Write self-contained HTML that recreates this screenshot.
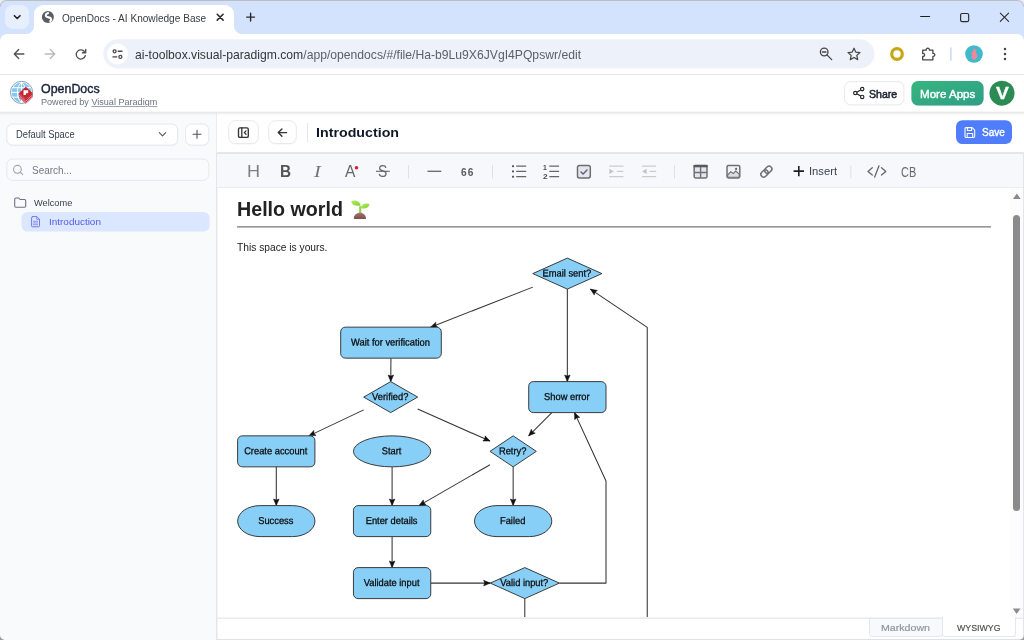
<!DOCTYPE html>
<html lang="en">
<head>
<meta charset="utf-8">
<title>OpenDocs - AI Knowledge Base</title>
<style>
*{box-sizing:border-box;margin:0;padding:0}
html,body{width:1024px;height:640px;overflow:hidden;background:#fff}
body{font-family:"Liberation Sans",sans-serif;position:relative;color:#1f2937}
.abs{position:absolute}
.t{position:absolute;white-space:nowrap;line-height:1;transform-origin:0 50%}
svg{position:absolute;overflow:visible}
/* browser chrome */
#tabstrip{left:-8px;top:-8px;width:1040px;height:48px;background:#d3e3fd}
#tabsearch{left:5px;top:5px;width:24px;height:24px;border-radius:8px;background:#e7effd}
#tab{left:34px;top:5px;width:200px;height:30px;background:#fff;border-radius:9px 9px 0 0}
#tabl{left:26px;top:26px;width:8px;height:8px;background:radial-gradient(circle at 0 0,rgba(255,255,255,0) 7.5px,#fff 8.5px)}
#tabr{left:234px;top:26px;width:8px;height:8px;background:radial-gradient(circle at 100% 0,rgba(255,255,255,0) 7.5px,#fff 8.5px)}
#toolbar{left:0;top:34px;width:1024px;height:40px;background:#fff;border-radius:7px 7px 0 0}
#toolbarbleed{left:-8px;top:41px;width:1040px;height:33px;background:#fff}
#tbline{left:-8px;top:74px;width:1040px;height:1px;background:#e4e6e4}
#omni{left:103px;top:39.5px;width:771.5px;height:29px;border-radius:14.5px;background:#edf2fa}
#siteinfo{left:106.5px;top:43px;width:22px;height:22px;border-radius:11px;background:#fff}
/* app */
#apphead{left:-8px;top:75px;width:1040px;height:37px;background:#fff}
#appline{left:-8px;top:111px;width:1040px;height:5px;background:linear-gradient(rgba(10,10,30,.03) 0 1px,rgba(10,14,30,.095) 1px 2px,rgba(0,0,0,.05) 2px 3px,rgba(0,0,0,.02) 3px 4px,rgba(0,0,0,.008) 4px 5px)}
#sidebar{left:-8px;top:113px;width:224px;height:535px;background:#f9fafb}
#sideline{left:216px;top:113px;width:1px;height:40px;background:#ebedf1}
#sideline2{left:216px;top:153px;width:2px;height:495px;background:linear-gradient(90deg,#e4e5ea 0 1px,#f3f3f6 1px 2px)}
.btn{position:absolute;background:#fff;border:1px solid #e5e7eb;border-radius:6px}
#edbar{left:217px;top:153px;width:806px;height:35px;background:#f7f8fc;border-top:1px solid #e2e5ec;border-bottom:1px solid #ebedf2}
#docline{left:217px;top:152px;width:815px;height:1px;background:#e5e7eb}
#h1line{left:237px;top:226px;width:754px;height:2px;background:linear-gradient(#989898 0,#989898 50%,#bbb 50%,#bbb 100%)}
#track{left:1010px;top:188px;width:13px;height:430px;background:#fcfcfc}
#thumb{left:1012.9px;top:214.5px;width:7.6px;height:296.5px;border-radius:3.8px;background:#8b8b8b}
#botline{left:217px;top:617px;width:806px;height:2px;background:linear-gradient(#f2f3f7 0 1px,#e9ebf0 1px 2px)}
#rline{left:1023px;top:153px;width:9px;height:495px;background:#e3e5ee}
#bline{left:217px;top:639px;width:815px;height:9px;background:#dfe1e8}
#tabmd{left:868.5px;top:618px;width:74.5px;height:19px;background:#f7f9fc;border:1px solid #e5e7ef;border-radius:0 0 3px 3px}
#tabwy{left:942px;top:617px;width:74px;height:20px;background:#fff;border:1px solid #e5e7ef;border-top:0;border-radius:0 0 3px 3px}
#wrap{position:absolute;left:-8px;top:-8px;width:1040px;height:656px;overflow:hidden;will-change:transform}
#pg{position:absolute;left:8px;top:8px;width:1024px;height:640px}
</style>
</head>
<body>
<div id="wrap"><div id="pg">
<!-- ===== Browser chrome ===== -->
<div class="abs" id="tabstrip"></div>
<div class="abs" id="tabsearch"></div>
<div class="abs" id="tab"></div>
<div class="abs" id="tabl"></div><div class="abs" id="tabr"></div>
<div class="abs" id="toolbar"></div><div class="abs" id="toolbarbleed"></div>
<div class="abs" id="tbline"></div>
<svg width="1024" height="75" viewBox="0 0 1024 75" style="left:0;top:0"><rect x="103.200" y="39.200" width="771.300" height="29.200" rx="14.600" fill="#edf2fa"/><circle cx="117.500" cy="54" r="10.400" fill="#fff"/></svg>
<div class="t" style="left:61.83px;top:12px;font-size:11.6px;color:#393c40;transform:scaleX(0.8703);">OpenDocs - AI Knowledge Base</div>
<div class="t" style="left:134.69px;top:48px;font-size:13.6px;color:#34363a;transform:scaleX(0.8943);">ai-toolbox.visual-paradigm.com<span style="color:#5c6066">/app/opendocs/#/file/Ha-b9Lu9X6JVgI4PQpswr/edit</span></div>
<svg id="chromeicons" width="1024" height="75" viewBox="0 0 1024 75" style="left:0;top:0" fill="none" stroke-linecap="round" stroke-linejoin="round">
<!-- tab search chevron -->
<path d="M14.400 15.700L17.200 18.500L20 15.700" stroke="#1f1f1f" stroke-width="1.600"/>
<!-- favicon globe -->
<circle cx="47.900" cy="17.100" r="6" fill="#5a5d61"/>
<path d="M48.800 12.700c-2.300.500-3.600 2.300-2.600 3.700 1 1.300 3.600.700 4.600 2 .800 1.100.100 2.600-1.200 3.400" stroke="#fff" stroke-width="2.100" stroke-linecap="butt"/>
<!-- tab close -->
<path d="M217.200 14.200l5.900 5.900M223.100 14.200l-5.900 5.900" stroke="#2a2a2a" stroke-width="1.550"/>
<!-- new tab plus -->
<path d="M246.700 17.100h7.800M250.600 13.200v7.800" stroke="#2a2a2a" stroke-width="1.400"/>
<!-- window controls -->
<path d="M920.600 16.500h9" stroke="#1f1f1f" stroke-width="1.1"/>
<rect x="960.600" y="13.500" width="8.100" height="8.100" rx="1.600" stroke="#2a2a2a" stroke-width="1.150"/>
<path d="M1000.300 13.100l8.300 8.300M1008.600 13.100l-8.300 8.300" stroke="#2a2a2a" stroke-width="1.050"/>
<!-- back -->
<path d="M23.800 54h-9.400M18.700 49.600l-4.400 4.400 4.400 4.400" stroke="#505357" stroke-width="1.400"/>
<!-- forward (disabled) -->
<path d="M45.200 54h9.400M50.300 49.600l4.400 4.400-4.400 4.400" stroke="#b9bbbe" stroke-width="1.400"/>
<!-- reload -->
<path d="M84.900 52.200a4.600 4.600 0 1 0 .4 3.500" stroke="#505357" stroke-width="1.350"/>
<path d="M85.700 49.400v3.300h-3.300" stroke="#505357" stroke-width="1.350"/>
<!-- site info (tune) -->
<circle cx="114.600" cy="51.300" r="1.500" stroke="#474747" stroke-width="1.300"/>
<path d="M118.300 51.300h3.700" stroke="#474747" stroke-width="1.400"/>
<circle cx="120.400" cy="56.900" r="1.500" stroke="#474747" stroke-width="1.300"/>
<path d="M113 56.900h3.700" stroke="#474747" stroke-width="1.400"/>
<!-- zoom -->
<circle cx="824.200" cy="52" r="3.800" stroke="#474747" stroke-width="1.300"/>
<path d="M827 54.900l4.700 4.700M822.400 52h3.600" stroke="#474747" stroke-width="1.300"/>
<!-- star -->
<path d="M854 48.200l1.750 3.900 4.250.45-3.200 2.850.900 4.200-3.700-2.150-3.700 2.150.900-4.200-3.200-2.850 4.250-.45z" stroke="#474747" stroke-width="1.250"/>
<!-- extension ring -->
<circle cx="897" cy="54" r="5.300" stroke="#c7a716" stroke-width="3.200"/>
<!-- puzzle -->
<path d="M922.700 50.200h3.500a1.650 1.650 0 1 1 3.200 0h3.500v3.200a1.500 1.500 0 1 1 0 2.900v3.500h-10.200v-3.400a1.500 1.500 0 1 0 0-2.900z" stroke="#474747" stroke-width="1.300"/>
<!-- separator -->
<path d="M950.900 47.800v12.400" stroke="#b9d0f8" stroke-width="1.200"/>
<!-- avatar -->
<circle cx="974" cy="54" r="8.800" fill="#3fb9cb"/>
<path d="M973.200 49.500l2.200-1.600-.3 2.300 1.800-.6-1.200 2 .8 2.200 1 2.800-1.600 2.600-3.300.3-1.400-2.300 1.300-2.400-1.600-1.600 1.700-1z" fill="#f0879b" stroke="none"/>
<!-- menu -->
<circle cx="1005" cy="48.900" r="1.250" fill="#474747"/><circle cx="1005" cy="54" r="1.250" fill="#474747"/><circle cx="1005" cy="59.100" r="1.250" fill="#474747"/>
</svg>
<!-- ===== App header ===== -->
<div class="abs" id="apphead"></div>
<svg width="28" height="28" viewBox="0 0 28 28" style="left:8px;top:79px" fill="none">
<circle cx="13.550" cy="13.400" r="11.100" fill="#fff" stroke="#7f9fad" stroke-width="0.950"/>
<circle cx="13.550" cy="13.400" r="9.900" fill="#84c7f0"/>
<path d="M3.500 13.400h20M5 8.700h17M5 18.100h17M13.550 3.400v20M13.550 3.400c-5.500 3.300-5.500 16.700 0 20M13.550 3.400c5.500 3.300 5.500 16.700 0 20" stroke="#fff" stroke-width="1"/>
<path d="M11 14l6.800 6.300 6.800-6.300v4.300l-6.800 6.400-6.800-6.400z" fill="#c9232d"/>
<path d="M11 15.900l6.800 6.300 6.800-6.300M11 17.700l6.800 6.300 6.800-6.300" stroke="#fbe4e5" stroke-width="0.600"/>
<path d="M17.800 7.800l6.800 6.200-6.800 6.300-6.800-6.300z" fill="#c9232d"/>
<path d="M15.500 11.300h4.700v2.900h-2.300v1.900h-2.400z" fill="#fff"/>
</svg>
<div class="t" style="left:40.72px;top:83px;font-size:12.4px;color:#1a2238;transform:scaleX(1.0024);-webkit-text-stroke:0.4px #1a2238;">OpenDocs</div>
<div class="t" style="left:40.66px;top:97px;font-size:9.6px;color:#6b7280;transform:scaleX(0.9451);">Powered by <span style="text-decoration:underline;text-decoration-thickness:0.8px;text-underline-offset:1px;text-decoration-color:#9ea3ad">Visual Paradigm</span></div>
<svg width="66" height="30" style="left:842px;top:79px"><rect x="2.60" y="2.60" width="59.30" height="23.30" rx="6.00" fill="#fff" stroke="#e6e8ec" stroke-width="1"/></svg>
<svg width="14" height="14" viewBox="0 0 14 14" style="left:851.5px;top:86px" fill="none" stroke="#222" stroke-width="1.150">
<circle cx="10.200" cy="3.100" r="1.700"/><circle cx="3.300" cy="7" r="1.700"/><circle cx="10.200" cy="10.900" r="1.700"/>
<path d="M4.800 6.200l3.900-2.300M4.800 7.800l3.900 2.300"/></svg>
<div class="t" style="left:868.72px;top:89px;font-size:11.2px;color:#1f2533;transform:scaleX(0.9451);-webkit-text-stroke:0.55px #1f2533;">Share</div>
<svg width="80" height="32" style="left:908px;top:78px"><defs><linearGradient id="ma" x1="0" y1="0" x2="1" y2="1"><stop offset="0" stop-color="#36b67e"/><stop offset="1" stop-color="#2f9d87"/></linearGradient></defs><rect x="3.4" y="3.6" width="72.300" height="24.600" rx="6.500" fill="#000" opacity="0.07"/><rect x="3.400" y="3" width="72.200" height="24.500" rx="6.500" fill="url(#ma)"/></svg>
<div class="t" style="left:920.05px;top:89px;font-size:11.2px;color:#fff;transform:scaleX(1.0342);-webkit-text-stroke:0.4px #fff;">More Apps</div>
<svg width="30" height="30" style="left:987px;top:78px"><circle cx="15" cy="15.200" r="12.500" fill="#2c8a55"/></svg>
<div class="t" style="left:995.58px;top:85px;font-size:17px;color:#fff;font-weight:bold;transform:scaleX(1.1316);-webkit-text-stroke:0.3px #fff;">V</div>
<!-- ===== Sidebar ===== -->
<div class="abs" id="sidebar"></div>
<div class="abs" id="sideline"></div><div class="abs" id="sideline2"></div>
<div class="abs" id="appline"></div>
<svg width="177" height="28" style="left:4px;top:122px"><rect x="2.30" y="2.20" width="171.80" height="22.00" rx="6.30" fill="#f1f2f4"/></svg><svg width="177" height="28" style="left:4px;top:121px"><rect x="2.80" y="3.00" width="170.80" height="21.10" rx="5.80" fill="#fff" stroke="#e6e8ec" stroke-width="1"/></svg>
<svg width="30" height="28" style="left:183px;top:122px"><rect x="2.10" y="2.20" width="24.10" height="22.00" rx="6.30" fill="#f1f2f4"/></svg><svg width="30" height="28" style="left:183px;top:121px"><rect x="2.60" y="3.00" width="23.10" height="21.10" rx="5.80" fill="#fff" stroke="#e6e8ec" stroke-width="1"/></svg>
<svg width="209" height="28" style="left:4px;top:156px"><rect x="2.80" y="3.00" width="202.00" height="21.30" rx="5.80" fill="#fafbfc" stroke="#e6e8ec" stroke-width="1"/></svg>
<svg width="194" height="25" style="left:19px;top:210px"><rect x="2.50" y="2.00" width="188.20" height="19.50" rx="6.00" fill="#dbe7fe"/></svg>
<svg width="216" height="130" viewBox="0 113 216 130" style="left:0;top:113px" fill="none" stroke-linecap="round" stroke-linejoin="round">
<path d="M159.300 132.700l3.200 3.100 3.200-3.100" stroke="#4b5563" stroke-width="1.100"/>
<path d="M193 134.300h8M197 130.300v8" stroke="#4b5563" stroke-width="1.100"/>
<circle cx="17.400" cy="169.300" r="3.900" stroke="#a0a6b1" stroke-width="1.150"/>
<path d="M20.300 172.200l2.400 2.400" stroke="#a0a6b1" stroke-width="1.150"/>
<path d="M14.700 199.200a1.200 1.200 0 0 1 1.200-1.200h2.900l1.300 1.500h4.400a1.200 1.200 0 0 1 1.200 1.200v5.300a1.200 1.200 0 0 1-1.200 1.200h-8.600a1.200 1.200 0 0 1-1.200-1.200z" stroke="#6b7280" stroke-width="1.100"/>
<path d="M32.500 216.600h4.300l2.700 2.700v6.600a.9.900 0 0 1-.9.900h-6.100a.9.900 0 0 1-.9-.9v-8.400a.9.900 0 0 1 .9-.9z" stroke="#6e71f3" stroke-width="0.950"/>
<path d="M36.700 216.700v2.700h2.700M33.400 221.300h4.200M33.400 223h4.200M33.400 224.700h4.200" stroke="#7c7ff4" stroke-width="0.800"/>
</svg>
<div class="t" style="left:15.73px;top:130px;font-size:10px;color:#374151;transform:scaleX(0.9340);">Default Space</div>
<div class="t" style="left:31.55px;top:166px;font-size:10px;color:#737985;transform:scaleX(0.9959);">Search...</div>
<div class="t" style="left:33.96px;top:198px;font-size:9.4px;color:#374151;transform:scaleX(0.9857);">Welcome</div>
<div class="t" style="left:48.58px;top:217px;font-size:9.4px;color:#5458e8;transform:scaleX(1.0598);">Introduction</div>
<!-- ===== Document header ===== -->
<div class="abs" id="docline"></div>
<svg width="36" height="29" style="left:226px;top:119px"><rect x="2.20" y="2.00" width="30.60" height="23.60" rx="7.00" fill="#f3f4f6"/></svg><svg width="36" height="29" style="left:226px;top:118px"><rect x="2.70" y="2.70" width="29.60" height="22.80" rx="6.50" fill="#fff" stroke="#e8eaee" stroke-width="1"/></svg>
<svg width="34" height="29" style="left:266px;top:119px"><rect x="2.20" y="2.00" width="28.60" height="23.60" rx="7.00" fill="#f3f4f6"/></svg><svg width="34" height="29" style="left:266px;top:118px"><rect x="2.70" y="2.70" width="27.60" height="22.80" rx="6.50" fill="#fff" stroke="#e8eaee" stroke-width="1"/></svg>
<div class="abs" style="left:306.5px;top:123px;width:1px;height:18.5px;background:#e5e7eb"></div>
<svg width="62" height="29" style="left:954px;top:118px"><rect x="2.00" y="2.20" width="56.00" height="23.90" rx="6.50" fill="#4f7dfc"/></svg>
<svg width="808" height="40" viewBox="216 113 808 40" style="left:216px;top:113px" fill="none" stroke-linecap="round" stroke-linejoin="round">
<rect x="238.500" y="127.900" width="9.800" height="9.500" rx="1.500" stroke="#333" stroke-width="1.350"/>
<path d="M241.800 127.900v9.500M246 130.900l-1.700 1.700 1.700 1.700" stroke="#333" stroke-width="1.300"/>
<path d="M286.600 132.600h-8M281.900 129l-3.600 3.600 3.600 3.600" stroke="#333" stroke-width="1.400"/>
<path d="M966.200 127.600h6l2.500 2.500v6.100a1.200 1.200 0 0 1-1.200 1.200h-7.300a1.200 1.200 0 0 1-1.200-1.200v-7.400a1.200 1.200 0 0 1 1.200-1.200z" stroke="#fff" stroke-width="1.050"/>
<path d="M967.400 127.800v2.700h4.200v-2.500M967.200 137.200v-3.700h5.500v3.700" stroke="#fff" stroke-width="1.050"/>
</svg>
<div class="t" style="left:316.26px;top:126px;font-size:13px;color:#101828;font-weight:bold;transform:scaleX(1.0950);">Introduction</div>
<div class="t" style="left:981.55px;top:127px;font-size:11px;color:#fff;transform:scaleX(0.9132);-webkit-text-stroke:0.4px #fff;">Save</div>
<!-- ===== Editor toolbar ===== -->
<div class="abs" id="edbar"></div>
<svg width="808" height="35" viewBox="216 153 808 35" style="left:216px;top:153px" fill="none" stroke-linejoin="round">
<g stroke="#dfe1e7" stroke-width="1"><path d="M408.500 165v13.500M492.500 165v13.500M674.500 165v13.500M850.800 165v13.500"/></g>
<!-- strike line / hr -->
<path d="M376 171.300h13.800" stroke="#666" stroke-width="1.100"/>
<path d="M427.500 171.300h13.800" stroke="#666" stroke-width="1.300"/>
<!-- red dot -->
<circle cx="356.500" cy="167.700" r="1.800" fill="#f0142f"/>
<!-- ul -->
<g stroke="#666" stroke-width="1.300"><path d="M516.200 166.200h10M516.200 171.400h10M516.200 176.700h10"/></g>
<g fill="#555"><rect x="512" y="165.300" width="2" height="1.800"/><rect x="512" y="170.500" width="2" height="1.800"/><rect x="512" y="175.800" width="2" height="1.800"/></g>
<!-- ol -->
<g stroke="#666" stroke-width="1.300"><path d="M549.300 166.200h9.800M549.300 171.400h9.800M549.300 176.700h9.800"/></g>
<!-- task -->
<rect x="577.500" y="165.500" width="12.800" height="12.400" rx="1.900" fill="#e4e5f0" stroke="#6e6e6e" stroke-width="1.500"/>
<path d="M581 172l2.100 2 3.900-3.900" stroke="#606060" stroke-width="1.400" stroke-linecap="round"/>
<!-- indent -->
<g stroke="#cbcbcb" stroke-width="1.200"><path d="M609.300 166.200h14.200M616.800 171.400h6.700M609.300 176.700h14.200"/></g>
<path d="M609.300 168.800l4.600 2.600-4.600 2.600z" fill="#c4c4c4"/>
<!-- outdent -->
<g stroke="#cbcbcb" stroke-width="1.200"><path d="M642 166.200h14.200M649.500 171.400h6.700M642 176.700h14.200"/></g>
<path d="M646.600 168.800l-4.600 2.600 4.600 2.600z" fill="#c4c4c4"/>
<!-- table -->
<rect x="694.200" y="165.600" width="12.800" height="12.300" rx="1.300" fill="#e4e5f0" stroke="#707070" stroke-width="1.500"/>
<path d="M693.500 166.100h14.200" stroke="#585858" stroke-width="2.400"/>
<path d="M700.600 167v10.800M694.200 172.500h12.800" stroke="#707070" stroke-width="1.400"/>
<!-- image -->
<rect x="727" y="165.500" width="12.800" height="12.400" rx="1.400" fill="#f2f3f9" stroke="#707070" stroke-width="1.500"/>
<path d="M727.700 175l3.200-3.400 2.300 2 2.500-2.600 3.500 3.100v3.200h-11.500z" fill="#dcdde9" stroke="#707070" stroke-width="1.100"/>
<circle cx="736.100" cy="168.900" r="1.100" fill="#666"/>
<!-- link -->
<g transform="rotate(-45 766.400 171.600)" stroke="#707070" stroke-width="1.500"><rect x="759.800" y="168.800" width="7.900" height="5.600" rx="2.800"/><rect x="765.100" y="168.800" width="7.900" height="5.600" rx="2.800"/></g>
<!-- plus -->
<path d="M793.600 171.100h10.400M798.800 166v10.300" stroke="#1f1f1f" stroke-width="1.600"/>
<!-- code -->
<g stroke="#666" stroke-width="1.300" stroke-linecap="round"><path d="M872.300 167.700l-4.300 3.700 4.300 3.700M881.500 167.700l4.300 3.700-4.300 3.700M879 165.800l-4.300 11.300"/></g>
</svg>
<div class="t" style="left:246.62px;top:163px;font-size:17.4px;color:#808080;transform:scaleX(1.0384);">H</div>
<div class="t" style="left:280.08px;top:163px;font-size:17.4px;color:#555;font-weight:bold;transform:scaleX(0.8842);">B</div>
<div class="t" style="left:314.28px;top:163px;font-size:17.6px;color:#737373;font-style:italic;font-family:'Liberation Serif',serif;transform:scaleX(1.1454);">I</div>
<div class="t" style="left:344.97px;top:163px;font-size:16.4px;color:#666;transform:scaleX(0.9473);">A</div>
<div class="t" style="left:378.38px;top:163px;font-size:16.4px;color:#666;transform:scaleX(0.8454);">S</div>
<div class="t" style="left:460.63px;top:168px;font-size:10.2px;color:#5a5a5a;font-weight:bold;transform:scaleX(0.9983);letter-spacing:1.2px;">66</div>
<div class="t" style="left:543.18px;top:164px;font-size:7.4px;color:#4a4a4a;font-weight:bold;transform:scaleX(0.9260);">1</div>
<div class="t" style="left:542.92px;top:173px;font-size:7.4px;color:#4a4a4a;font-weight:bold;transform:scaleX(1.1191);">2</div>
<div class="t" style="left:808.97px;top:167px;font-size:10.2px;color:#374151;transform:scaleX(1.1020);">Insert</div>
<div class="t" style="left:901.05px;top:165px;font-size:14.6px;color:#6a6a6a;transform:scaleX(0.7504);">CB</div>
<!-- ===== Content ===== -->
<div class="t" style="left:236.70px;top:199px;font-size:20px;color:#222;font-weight:bold;transform:scaleX(0.9835);">Hello world</div>
<svg width="22" height="22" viewBox="0 0 22 22" style="left:350px;top:199px" fill="none" role="img" aria-label="seedling"><title>&#127793;</title>
<defs><linearGradient id="lf" x1="0" y1="0" x2="1" y2="1"><stop offset="0" stop-color="#b4ef57"/><stop offset="1" stop-color="#7fcf3c"/></linearGradient>
<linearGradient id="so" x1="0" y1="0" x2="0" y2="1"><stop offset="0" stop-color="#a0726c"/><stop offset="1" stop-color="#7d4f4b"/></linearGradient></defs>
<path d="M9.200 7.200h2.100v7.400h-2.100z" fill="#8dd743"/>
<path d="M10.700 6.600c-.500-2.400-1.700-4.400-4.500-4.900-2-.400-4 .000-5 .200.300 2.200 1.700 4 4 4.600 2 .500 4 .400 5.500.100z" fill="url(#lf)"/>
<path d="M10.800 8.900c.600-2.300 2.200-3.900 4.600-4.300 1.600-.300 3.200 0 4.100.300-.300 2.200-1.700 3.900-3.800 4.400-1.800.400-3.600.200-4.900-.400z" fill="url(#lf)"/>
<path d="M3.800 19.400c.200-3.300 2.700-5.600 6.100-5.600s5.900 2.300 6.100 5.600c0 .400-.200.600-.600.600h-11c-.400 0-.600-.200-.600-.600z" fill="url(#so)"/>
</svg>
<div class="abs" id="h1line"></div>
<div class="t" style="left:236.57px;top:243px;font-size:10.4px;color:#222;transform:scaleX(0.9842);">This space is yours.</div>
<svg id="diagram" width="793" height="430" viewBox="217 188 793 430" style="left:217px;top:188px;overflow:hidden" font-family="'Liberation Sans',sans-serif">
<path d="M532.80 287.13 L430.59 327.15" fill="none" stroke="#353535" stroke-width="1.05" stroke-linejoin="round"/><polygon points="430.59,327.15 435.71,322.14 435.75,325.13 437.75,327.35" fill="#111" stroke="#111" stroke-width="0.5" stroke-linejoin="miter"/>
<path d="M567.35 289.10 L567.35 381.60" fill="none" stroke="#353535" stroke-width="1.05" stroke-linejoin="round"/><polygon points="567.35,381.60 564.55,375.00 567.35,376.06 570.15,375.00" fill="#111" stroke="#111" stroke-width="0.5" stroke-linejoin="miter"/>
<path d="M390.91 358.15 L390.79 381.60" fill="none" stroke="#353535" stroke-width="1.05" stroke-linejoin="round"/><polygon points="390.79,381.60 388.02,374.98 390.82,376.06 393.62,375.02" fill="#111" stroke="#111" stroke-width="0.5" stroke-linejoin="miter"/>
<path d="M363.70 409.90 L308.95 435.85" fill="none" stroke="#353535" stroke-width="1.05" stroke-linejoin="round"/><polygon points="308.95,435.85 313.71,430.49 313.96,433.48 316.11,435.55" fill="#111" stroke="#111" stroke-width="0.5" stroke-linejoin="miter"/>
<path d="M417.70 409.06 L490.00 441.09" fill="none" stroke="#353535" stroke-width="1.05" stroke-linejoin="round"/><polygon points="490.00,441.09 482.83,440.98 484.93,438.85 485.10,435.86" fill="#111" stroke="#111" stroke-width="0.5" stroke-linejoin="miter"/>
<path d="M551.86 412.60 L528.64 435.85" fill="none" stroke="#353535" stroke-width="1.05" stroke-linejoin="round"/><polygon points="528.64,435.85 531.32,429.20 532.55,431.93 535.28,433.16" fill="#111" stroke="#111" stroke-width="0.5" stroke-linejoin="miter"/>
<path d="M276.26 466.85 L276.29 505.60" fill="none" stroke="#353535" stroke-width="1.05" stroke-linejoin="round"/><polygon points="276.29,505.60 273.48,499.00 276.28,500.06 279.08,499.00" fill="#111" stroke="#111" stroke-width="0.5" stroke-linejoin="miter"/>
<path d="M392.10 466.85 L392.10 505.60" fill="none" stroke="#353535" stroke-width="1.05" stroke-linejoin="round"/><polygon points="392.10,505.60 389.30,499.00 392.10,500.06 394.90,499.00" fill="#111" stroke="#111" stroke-width="0.5" stroke-linejoin="miter"/>
<path d="M490.00 464.69 L419.00 505.60" fill="none" stroke="#353535" stroke-width="1.05" stroke-linejoin="round"/><polygon points="419.00,505.60 423.32,499.88 423.80,502.83 426.12,504.73" fill="#111" stroke="#111" stroke-width="0.5" stroke-linejoin="miter"/>
<path d="M513.15 466.85 L513.15 505.60" fill="none" stroke="#353535" stroke-width="1.05" stroke-linejoin="round"/><polygon points="513.15,505.60 510.35,499.00 513.15,500.06 515.95,499.00" fill="#111" stroke="#111" stroke-width="0.5" stroke-linejoin="miter"/>
<path d="M392.10 536.60 L392.10 567.60" fill="none" stroke="#353535" stroke-width="1.05" stroke-linejoin="round"/><polygon points="392.10,567.60 389.30,561.00 392.10,562.06 394.90,561.00" fill="#111" stroke="#111" stroke-width="0.5" stroke-linejoin="miter"/>
<path d="M430.75 583.10 L490.25 583.10" fill="none" stroke="#353535" stroke-width="1.05" stroke-linejoin="round"/><polygon points="490.25,583.10 483.65,585.90 484.71,583.10 483.65,580.30" fill="#111" stroke="#111" stroke-width="0.5" stroke-linejoin="miter"/>
<path d="M559.35 583.10 L606.00 583.10 L606.00 481.00 L574.49 412.60" fill="none" stroke="#353535" stroke-width="1.05" stroke-linejoin="round"/><polygon points="574.49,412.60 579.79,417.42 576.81,417.64 574.71,419.77" fill="#111" stroke="#111" stroke-width="0.5" stroke-linejoin="miter"/>
<path d="M524.8 598.6 V640" fill="none" stroke="#353535" stroke-width="1.05" stroke-linejoin="round"/>
<path d="M647.25 684.50 L647.25 327.40 L590.37 289.10" fill="none" stroke="#353535" stroke-width="1.05" stroke-linejoin="round"/><polygon points="590.37,289.10 597.41,290.46 594.97,292.20 594.28,295.11" fill="#111" stroke="#111" stroke-width="0.5" stroke-linejoin="miter"/>
<polygon points="567.35,258.10 601.90,273.6 567.35,289.10 532.80,273.6" fill="#88cff7" stroke="#333" stroke-width="0.95"/><text transform="translate(566.85,276.55) rotate(0.05) scale(0.934,1)" text-anchor="middle" font-size="10" fill="#0a0a0a" stroke="#0a0a0a" stroke-width="0.28">Email sent?</text>
<rect x="340.70" y="327.15" width="100.6" height="31.0" rx="4.7" ry="4.7" fill="#88cff7" stroke="#333" stroke-width="0.95"/><text transform="translate(390.50,345.60) rotate(0.05) scale(0.934,1)" text-anchor="middle" font-size="10" fill="#0a0a0a" stroke="#0a0a0a" stroke-width="0.28">Wait for verification</text>
<polygon points="390.7,381.60 417.70,397.1 390.7,412.60 363.70,397.1" fill="#88cff7" stroke="#333" stroke-width="0.95"/><text transform="translate(390.20,400.05) rotate(0.05) scale(0.934,1)" text-anchor="middle" font-size="10" fill="#0a0a0a" stroke="#0a0a0a" stroke-width="0.28">Verified?</text>
<rect x="528.70" y="381.60" width="77.3" height="31.0" rx="4.7" ry="4.7" fill="#88cff7" stroke="#333" stroke-width="0.95"/><text transform="translate(566.85,400.05) rotate(0.05) scale(0.934,1)" text-anchor="middle" font-size="10" fill="#0a0a0a" stroke="#0a0a0a" stroke-width="0.28">Show error</text>
<rect x="237.60" y="435.85" width="77.3" height="31.0" rx="4.7" ry="4.7" fill="#88cff7" stroke="#333" stroke-width="0.95"/><text transform="translate(275.75,454.30) rotate(0.05) scale(0.934,1)" text-anchor="middle" font-size="10" fill="#0a0a0a" stroke="#0a0a0a" stroke-width="0.28">Create account</text>
<ellipse cx="392.1" cy="451.35" rx="38.65" ry="15.5" fill="#88cff7" stroke="#333" stroke-width="0.95"/><text transform="translate(391.60,454.30) rotate(0.05) scale(0.934,1)" text-anchor="middle" font-size="10" fill="#0a0a0a" stroke="#0a0a0a" stroke-width="0.28">Start</text>
<polygon points="513.15,435.85 536.30,451.35 513.15,466.85 490.00,451.35" fill="#88cff7" stroke="#333" stroke-width="0.95"/><text transform="translate(512.65,454.30) rotate(0.05) scale(0.934,1)" text-anchor="middle" font-size="10" fill="#0a0a0a" stroke="#0a0a0a" stroke-width="0.28">Retry?</text>
<rect x="237.65" y="505.60" width="77.3" height="31.0" rx="22.5" ry="15.5" fill="#88cff7" stroke="#333" stroke-width="0.95"/><text transform="translate(275.80,524.05) rotate(0.05) scale(0.934,1)" text-anchor="middle" font-size="10" fill="#0a0a0a" stroke="#0a0a0a" stroke-width="0.28">Success</text>
<rect x="353.45" y="505.60" width="77.3" height="31.0" rx="4.7" ry="4.7" fill="#88cff7" stroke="#333" stroke-width="0.95"/><text transform="translate(391.60,524.05) rotate(0.05) scale(0.934,1)" text-anchor="middle" font-size="10" fill="#0a0a0a" stroke="#0a0a0a" stroke-width="0.28">Enter details</text>
<rect x="474.50" y="505.60" width="77.3" height="31.0" rx="22.5" ry="15.5" fill="#88cff7" stroke="#333" stroke-width="0.95"/><text transform="translate(512.65,524.05) rotate(0.05) scale(0.934,1)" text-anchor="middle" font-size="10" fill="#0a0a0a" stroke="#0a0a0a" stroke-width="0.28">Failed</text>
<rect x="353.45" y="567.60" width="77.3" height="31.0" rx="4.7" ry="4.7" fill="#88cff7" stroke="#333" stroke-width="0.95"/><text transform="translate(391.60,586.05) rotate(0.05) scale(0.934,1)" text-anchor="middle" font-size="10" fill="#0a0a0a" stroke="#0a0a0a" stroke-width="0.28">Validate input</text>
<polygon points="524.8,567.60 559.35,583.1 524.8,598.60 490.25,583.1" fill="#88cff7" stroke="#333" stroke-width="0.95"/><text transform="translate(524.30,586.05) rotate(0.05) scale(0.934,1)" text-anchor="middle" font-size="10" fill="#0a0a0a" stroke="#0a0a0a" stroke-width="0.28">Valid input?</text>
</svg>
<!-- ===== Scrollbar / mode switch ===== -->
<div class="abs" id="track"></div>
<div class="abs" id="thumb"></div>
<svg width="14" height="430" viewBox="1010 188 14 430" style="left:1010px;top:188px">
<path d="M1013 199h7.700l-3.850-5.600z" fill="#8b8b8b"/>
<path d="M1012.800 608.400h7.700l-3.850 5.600z" fill="#8b8b8b"/>
</svg>
<div class="abs" id="botline"></div>
<div class="abs" id="rline"></div>
<div class="abs" id="bline"></div>
<div class="abs" id="tabmd"></div>
<div class="abs" id="tabwy"></div>
<div class="t" style="left:880.93px;top:623px;font-size:9.8px;color:#9197a3;transform:scaleX(1.0851);-webkit-text-stroke:0.2px #9197a3;">Markdown</div>
<div class="t" style="left:957.36px;top:623px;font-size:9.8px;color:#4b4b4b;transform:scaleX(0.8994);-webkit-text-stroke:0.15px #4b4b4b;">WYSIWYG</div>
<!-- ===== Window frame ===== -->
<svg width="1024" height="640" viewBox="0 0 1024 640" style="left:0;top:0;pointer-events:none" fill="none">
<path d="M0 0h5.500a5.500 5.500 0 0 0-5.500 5.500z" fill="#ededed"/>
<path d="M1024 0h-5.500a5.500 5.500 0 0 1 5.500 5.500z" fill="#ededed"/>
<path d="M0 640h5a5 5 0 0 1-5-5z" fill="#9a9a9a"/>
<path d="M1024 640h-5a5 5 0 0 0 5-5z" fill="#9a9a9a"/>
<path d="M0.400 6.500a6 6 0 0 1 6-6h1011.200a6 6 0 0 1 6 6" stroke="#bdbdbf" stroke-width="1"/>
<path d="M6 -4h1012" stroke="#bdbdbf" stroke-width="8"/>
</svg>
</div></div>
</body>
</html>
